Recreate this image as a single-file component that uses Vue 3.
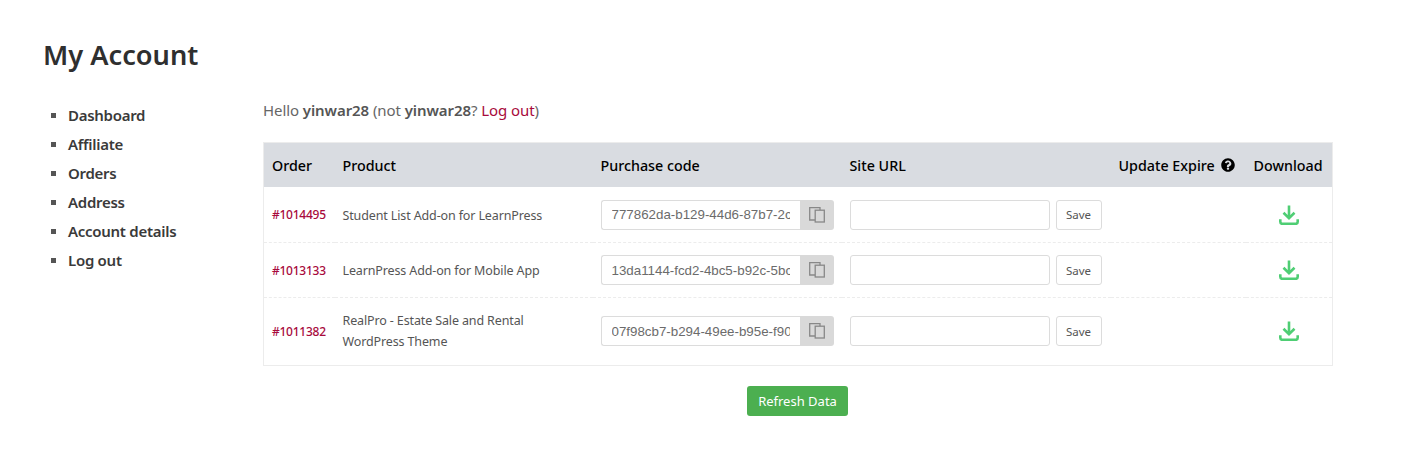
<script setup>
const nav = ['Dashboard', 'Affiliate', 'Orders', 'Address', 'Account details', 'Log out']
const rows = [
  { id: '#1014495', lines: ['Student List Add-on for LearnPress'], code: '777862da-b129-44d6-87b7-2c9f0e1a4d7b' },
  { id: '#1013133', lines: ['LearnPress Add-on for Mobile App'], code: '13da1144-fcd2-4bc5-b92c-5bc7e0a1d233' },
  { id: '#1011382', lines: ['RealPro - Estate Sale and Rental', 'WordPress Theme'], code: '07f98cb7-b294-49ee-b95e-f90a6c31d8e2' }
]
</script>

<template>
  <div class="page">
    <h1 class="title">My Account</h1>
    <div class="layout">
      <ul class="nav">
        <li v-for="item in nav" :key="item">{{ item }}</li>
      </ul>
      <main class="content">
        <p class="hello">Hello <strong>yinwar28</strong> (not <strong>yinwar28</strong>? <a>Log out</a>)</p>
        <table class="orders">
          <colgroup>
            <col class="c1" /><col class="c2" /><col class="c3" /><col class="c4" /><col class="c5" /><col class="c6" />
          </colgroup>
          <thead>
            <tr>
              <th>Order</th>
              <th>Product</th>
              <th>Purchase code</th>
              <th>Site URL</th>
              <th>
                <span class="expire">Update Expire
                  <svg class="help" viewBox="0 0 512 512" width="14" height="14">
                    <path fill="#000" d="M504 256c0 137-111 248-248 248S8 393 8 256 119 8 256 8s248 111 248 248zM262.700 90c-54.500 0-89.300 23-116.600 63.800-3.500 5.300-2.400 12.400 2.700 16.300l34.700 26.300c5.200 3.900 12.600 3 16.700-2.100 17.900-22.700 30.100-35.800 57.300-35.800 20.400 0 45.700 13.100 45.700 33 0 15-12.400 22.700-32.600 34-23.600 13.200-54.800 29.700-54.800 70.900V316c0 6.600 5.400 12 12 12h56c6.600 0 12-5.400 12-12v-1.300c0-28.600 83.500-29.800 83.500-107.100 0-58.200-60.400-117.600-117-117.600zM256 346c-24.300 0-44 19.700-44 44s19.700 44 44 44 44-19.700 44-44-19.700-44-44-44z"/>
                  </svg>
                </span>
              </th>
              <th>Download</th>
            </tr>
          </thead>
          <tbody>
            <tr v-for="row in rows" :key="row.id">
              <td class="oid">{{ row.id }}</td>
              <td class="product"><span v-for="l in row.lines" :key="l" class="pline">{{ l }}</span></td>
              <td>
                <div class="group">
                  <input class="code" type="text" :value="row.code" readonly />
                  <button class="copy" type="button" aria-label="Copy">
                    <svg viewBox="0 0 16 16" width="16" height="16" fill="none" stroke="#888" stroke-width="1.300">
                      <path d="M11 3V.7H.7V13H6" />
                      <rect x="6.200" y="3.200" width="9.100" height="11.800" />
                    </svg>
                  </button>
                </div>
              </td>
              <td>
                <div class="site">
                  <input class="url" type="text" />
                  <button class="save" type="button">Save</button>
                </div>
              </td>
              <td></td>
              <td class="dl">
                <svg viewBox="0 0 20 20" width="20" height="20" fill="none" stroke="#4fce74" stroke-width="2.600">
                  <path d="M10 .5V13M4.500 7.800L10 13.200l5.500-5.400" />
                  <path d="M1.300 14.300v2.500c0 1.200 .8 2 2 2h13.400c1.200 0 2-.8 2-2v-2.500" />
                </svg>
              </td>
            </tr>
          </tbody>
        </table>
        <div class="actions">
          <button class="refresh" type="button">Refresh Data</button>
        </div>
      </main>
    </div>
  </div>
</template>

<style>
html, body { margin: 0; background: #fff; }
</style>

<style scoped>
.page {
  box-sizing: border-box;
  width: 1404px;
  height: 450px;
  overflow: hidden;
  padding: 36px 71px 0 43px;
  font-family: "Noto Sans", sans-serif;
  color: #555;
}
.title {
  margin: 0;
  font-size: 27.200px;
  line-height: 38px;
  font-weight: 600;
  color: #2f2f2f;
}
.layout {
  display: flex;
  margin-top: 24px;
}
.nav {
  box-sizing: border-box;
  width: 220px;
  margin: 3px 0 0;
  padding: 0 0 0 25px;
  list-style: square;
  font-size: 15px;
  letter-spacing: -0.280px;
  font-weight: 600;
  line-height: 29px;
  color: #3a3a3a;
}
.nav li::marker { color: #555; font-size: 14px; }
.content { width: 1070px; }
.hello {
  margin: 0;
  font-size: 15px;
  letter-spacing: -0.080px;
  line-height: 24px;
  color: #666;
}
.hello strong { font-weight: 600; color: #555; }
.hello a { color: #a80a3c; }
.orders {
  width: 1069px;
  margin-top: 20px;
  border-collapse: collapse;
  table-layout: fixed;
  border: 1px solid #ececec;
  border-top: 0;
}
.c1 { width: 71px; }
.c2 { width: 258px; }
.c3 { width: 249px; }
.c4 { width: 269px; }
.c5 { width: 135px; }
.c6 { width: 87px; }
th {
  height: 44px;
  padding: 0 8px;
  background: #d9dce1;
  border-top: 1px solid #ececec;
  text-align: left;
  font-size: 14.300px;
  font-weight: 500;
  color: #000;
  white-space: nowrap;
}
.expire { display: inline-flex; align-items: center; gap: 6px; }
.help { flex: none; }
td {
  height: 54px;
  padding: 0 8px;
  border-bottom: 1px dashed #ececec;
  font-size: 12.500px;
  letter-spacing: -0.130px;
  color: #555;
}
tbody tr:first-child td { height: 55px; }
tbody tr:first-child .product { height: 54px; padding-top: 1px; }
tbody tr:last-child td { height: 66px; padding-bottom: 1px; border-bottom: 1px solid #ececec; }
.oid { font-weight: 500; color: #a80a3c; font-size: 12px; letter-spacing: -0.250px; white-space: nowrap; }
.pline { display: block; line-height: 21px; white-space: nowrap; }
.group { display: flex; width: 233px; height: 30px; }
.code, .url {
  box-sizing: border-box;
  height: 30px;
  margin: 0;
  border: 1px solid #dcdcdc;
  background: #fff;
  outline: 0;
}
.code {
  width: 199px;
  padding: 0 10px;
  border-right: 0;
  border-radius: 3px 0 0 3px;
  font-family: "Liberation Sans", sans-serif;
  font-size: 13.330px;
  letter-spacing: 0;
  color: #6b6b6b;
}
.copy {
  display: flex;
  align-items: center;
  justify-content: center;
  width: 34px;
  height: 30px;
  padding: 0;
  border: 0;
  border-radius: 0 3px 3px 0;
  background: #d9d9d9;
}
.site { display: flex; gap: 6px; }
.url { width: 200px; border-radius: 3px; }
.save {
  box-sizing: border-box;
  width: 46px;
  height: 30px;
  padding: 0;
  border: 1px solid #dcdcdc;
  border-radius: 3px;
  background: #fff;
  font-family: inherit;
  font-size: 11.500px;
  color: #555;
}
.dl { text-align: center; }
.dl svg { display: block; margin: 0 auto; }
.actions { display: flex; justify-content: center; margin-top: 20px; padding-right: 1px; }
.refresh {
  width: 101px;
  height: 30px;
  padding: 0;
  border: 0;
  border-radius: 3px;
  background: #4caf50;
  color: #fff;
  font-family: inherit;
  font-size: 13px;
}
</style>
